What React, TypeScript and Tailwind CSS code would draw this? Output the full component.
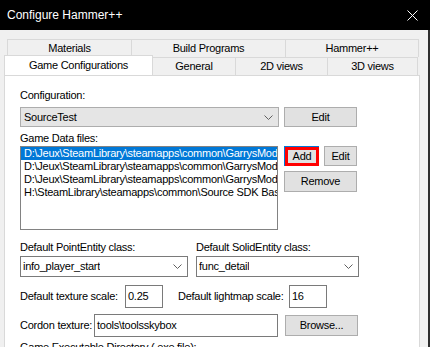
const ROW1 = [
  { label: 'Materials', w: 'w-[124px]' },
  { label: 'Build Programs', w: 'w-[154px]' },
  { label: 'Hammer++', w: 'w-[134px] border-r' },
];

const ROW2 = [
  { label: 'General', w: 'w-[83px]' },
  { label: '2D views', w: 'w-[92px]' },
  { label: '3D views', w: 'w-[90px]' },
];

const FILES = [
  'D:\\Jeux\\SteamLibrary\\steamapps\\common\\GarrysMod',
  'D:\\Jeux\\SteamLibrary\\steamapps\\common\\GarrysMod',
  'D:\\Jeux\\SteamLibrary\\steamapps\\common\\GarrysMod',
  'H:\\SteamLibrary\\steamapps\\common\\Source SDK Base',
];

function Chevron() {
  return (
    <svg width="9" height="5" viewBox="0 0 9 5" className="shrink-0">
      <polyline points="0.5,0.5 4.5,4.5 8.5,0.5" fill="none" stroke="#606060" strokeWidth="1" />
    </svg>
  );
}

function Btn({ label, className }: { label: string; className: string }) {
  return (
    <div className={`shrink-0 flex items-center justify-center bg-[#e1e1e1] border border-[#adadad] ${className}`}>
      {label}
    </div>
  );
}

function Combo({ value, className }: { value: string; className: string }) {
  return (
    <div className={`flex items-center justify-between bg-white border border-[#7a7a7a] pl-[2px] pr-[5px] ${className}`}>
      <span className="whitespace-nowrap overflow-hidden">{value}</span>
      <Chevron />
    </div>
  );
}

function Field({ value, className }: { value: string; className: string }) {
  return (
    <div className={`shrink-0 flex items-center bg-white border border-[#7a7a7a] pl-[2px] ${className}`}>
      {value}
    </div>
  );
}

export default function App() {
  return (
    <div className="w-[430px] h-[347px] overflow-hidden bg-[#f0f0f0] font-['Liberation_Sans',Arial,sans-serif] text-[11px] leading-[13px] tracking-[-0.25px] text-black flex flex-col">
      <div className="h-[30px] shrink-0 bg-black flex items-center justify-between pl-[7px] pr-[12px]">
        <span className="text-white text-[12px] tracking-normal">Configure Hammer++</span>
        <svg width="11" height="11" viewBox="0 0 11 11">
          <path d="M0.5 0.5L10.5 10.5M10.5 0.5L0.5 10.5" stroke="white" strokeWidth="1" />
        </svg>
      </div>

      <div className="flex flex-1 min-h-0 border-r-2 border-[#2d2d2d]">
        <div className="w-[4px] shrink-0" />
        <div className="w-[416px] shrink-0 flex flex-col pt-[9px]">
          {/* tabs */}
          <div className="flex shrink-0 h-[18px] ml-[3px]">
            {ROW1.map(t => (
              <div key={t.label} className={`${t.w} flex items-center justify-center border-l border-t border-[#d9d9d9] bg-[#f0f0f0]`}>
                {t.label}
              </div>
            ))}
          </div>
          <div className="flex shrink-0 h-[18px]">
            <div className="w-[149px] h-[20px] -mt-[2px] relative z-10 flex items-center justify-center bg-white border-l border-t border-r border-[#d9d9d9]">
              Game Configurations
            </div>
            {ROW2.map(t => (
              <div key={t.label} className={`${t.w} flex items-center justify-center border-t border-r border-[#d9d9d9] bg-[#f0f0f0]`}>
                {t.label}
              </div>
            ))}
          </div>

          {/* page */}
          <div className="flex-1 min-h-0 bg-white border-l border-t border-r border-[#d9d9d9] pl-[15px] pt-[13px] flex flex-col whitespace-nowrap">
            <div className="shrink-0">Configuration:</div>
            <div className="mt-[5px] shrink-0 flex gap-[5px] h-[20px]">
              <div className="w-[259px] flex items-center justify-between bg-[#e5e5e5] border border-[#adadad] pl-[3px] pr-[5px]">
                <span>SourceTest</span>
                <Chevron />
              </div>
              <Btn label="Edit" className="w-[73px]" />
            </div>

            <div className="mt-[5px] shrink-0">Game Data files:</div>
            <div className="mt-[1px] shrink-0 flex">
              <div className="w-[258px] h-[84px] shrink-0 border border-[#828282] flex flex-col overflow-hidden">
                {FILES.map((f, i) => (
                  <div
                    key={i}
                    className={`h-[13px] shrink-0 pl-[3px] overflow-hidden ${i === 0 ? 'bg-[#0078d7] text-white' : ''}`}
                  >
                    {f}
                  </div>
                ))}
              </div>
              <div className="ml-[6px] flex flex-col gap-[5px]">
                <div className="flex gap-[5px] h-[20px]">
                  <div className="w-[35px] flex border-t border-l border-[#0078d7]">
                    <div className="flex-1 flex items-center justify-center bg-[#e1e1e1] border-[3px] border-[#ff0000]">
                      Add
                    </div>
                  </div>
                  <Btn label="Edit" className="w-[33px]" />
                </div>
                <Btn label="Remove" className="w-[73px] h-[21px]" />
              </div>
            </div>

            <div className="mt-[11px] shrink-0 flex gap-[8px]">
              <div className="flex flex-col">
                <div>Default PointEntity class:</div>
                <Combo value="info_player_start" className="mt-[2px] w-[168px] h-[21px]" />
              </div>
              <div className="flex flex-col">
                <div>Default SolidEntity class:</div>
                <Combo value="func_detail" className="mt-[2px] w-[163px] h-[21px]" />
              </div>
            </div>

            <div className="mt-[8px] shrink-0 flex items-center h-[23px]">
              <div className="w-[105px] shrink-0">Default texture scale:</div>
              <Field value="0.25" className="w-[38px] h-[23px]" />
              <div className="ml-[15px] w-[111px] shrink-0">Default lightmap scale:</div>
              <Field value="16" className="w-[38px] h-[23px]" />
            </div>

            <div className="mt-[6px] shrink-0 flex items-center h-[23px]">
              <div className="w-[74px] shrink-0">Cordon texture:</div>
              <Field value="tools\toolsskybox" className="w-[184px] h-[23px]" />
              <Btn label="Browse..." className="ml-[7px] w-[73px] h-[21px]" />
            </div>

            <div className="mt-[4px] shrink-0">Game Executable Directory (.exe file):</div>
          </div>
        </div>
      </div>
    </div>
  );
}
